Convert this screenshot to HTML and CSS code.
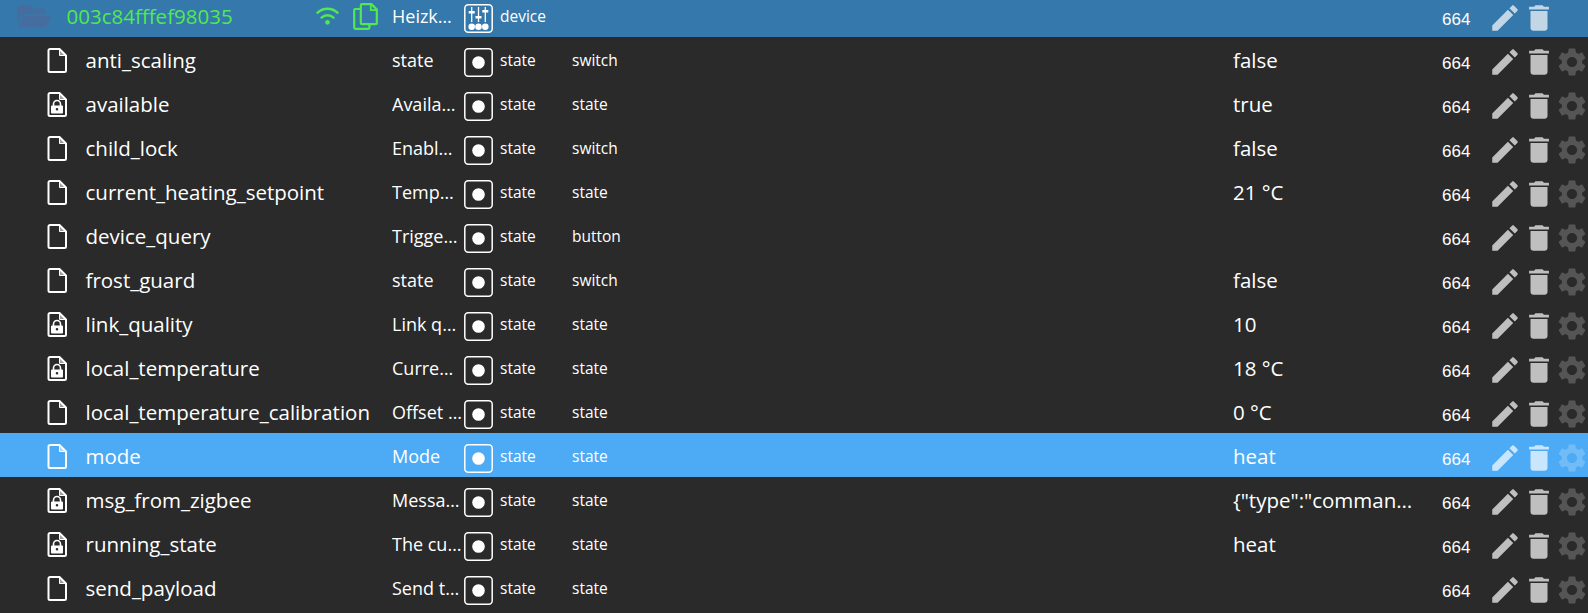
FILE: index.html
```html
<!DOCTYPE html>
<html lang="en">
<head>
<meta charset="utf-8">
<title>Objects</title>
<link rel="stylesheet" href="styles.css">
</head>
<body>
<svg class="sprite" aria-hidden="true">
  <symbol id="i-folder" viewBox="0 0 576 512"><path d="M572.694 292.093L500.27 416.248A63.997 63.997 0 0 1 444.989 448H45.025c-18.523 0-30.064-20.093-20.731-36.093l72.424-124.155A64 64 0 0 1 152 256h399.964c18.523 0 30.064 20.093 20.73 36.093zM152 224h328v-48c0-26.51-21.49-48-48-48H272l-64-64H48C21.49 64 0 85.49 0 112v278.046l69.077-118.418C86.214 242.25 117.989 224 152 224z"/></symbol>
  <symbol id="i-wifi" viewBox="0 0 24 18"><path d="M12 13.2a2.4 2.4 0 1 0 0 4.8 2.4 2.4 0 0 0 0-4.8z"/><path d="M5.8 10.6a9 9 0 0 1 12.4 0" fill="none" stroke="currentColor" stroke-width="2.6" stroke-linecap="round"/><path d="M1.6 5.6a15.2 15.2 0 0 1 20.8 0" fill="none" stroke="currentColor" stroke-width="2.6" stroke-linecap="round"/></symbol>
  <symbol id="i-copy" viewBox="0 0 25 27"><path d="M9 1.2h9.5l5.3 5.3V20a1.2 1.2 0 0 1-1.2 1.2H9A1.2 1.2 0 0 1 7.800 20V2.400A1.200 1.200 0 0 1 9 1.200z" fill="none" stroke="currentColor" stroke-width="2.200"/><path d="M17.800 1.500v5.700h5.700" fill="none" stroke="currentColor" stroke-width="1.800"/><path d="M7.800 6H2.400A1.200 1.200 0 0 0 1.200 7.200v17.400a1.200 1.200 0 0 0 1.200 1.200h12.800a1.200 1.200 0 0 0 1.200-1.200v-3.400" fill="none" stroke="currentColor" stroke-width="2.200"/></symbol>
  <symbol id="i-file" viewBox="0 0 20 25"><path d="M3 1h9.500L19 7.500V22.500a1.500 1.500 0 0 1-1.500 1.500H3a1.500 1.500 0 0 1-1.500-1.500V2.500A1.500 1.500 0 0 1 3 1z" fill="none" stroke="currentColor" stroke-width="2"/><path d="M12.500 1.500V7.500H18.500z" fill="currentColor" opacity=".55"/><path d="M12.500 1.500V7.500H18.500" fill="none" stroke="currentColor" stroke-width="1"/></symbol>
  <symbol id="i-lock" viewBox="0 0 20 25"><path d="M3 1h9.500L19 7.500V22.500a1.500 1.500 0 0 1-1.500 1.500H3a1.500 1.500 0 0 1-1.500-1.500V2.500A1.500 1.500 0 0 1 3 1z" fill="none" stroke="currentColor" stroke-width="2"/><path d="M12.500 1.500V7.500H18.500z" fill="currentColor" opacity=".55"/><path d="M12.500 1.500V7.500H18.500" fill="none" stroke="currentColor" stroke-width="1"/><path d="M6.500 14v-2a3.500 3.500 0 0 1 7 0v2" fill="none" stroke="currentColor" stroke-width="1.600"/><path fill-rule="evenodd" d="M5 13.500h10a1 1 0 0 1 1 1v6a1 1 0 0 1-1 1H5a1 1 0 0 1-1-1v-6a1 1 0 0 1 1-1zM10 16a1.300 1.300 0 1 0 0 2.600 1.300 1.300 0 0 0 0-2.600z"/></symbol>
  <symbol id="i-state" viewBox="0 0 29 29"><rect x=".8" y=".8" width="27.400" height="27.400" rx="3.500" fill="none" stroke="currentColor" stroke-width="1.500"/><circle cx="14.500" cy="14.500" r="6.300"/></symbol>
  <symbol id="i-device" viewBox="0 0 29 29"><rect x=".8" y=".8" width="27.400" height="27.400" rx="3.500" fill="none" stroke="currentColor" stroke-width="1.500"/><path d="M7.700 3v15M14.500 3v15M21.300 3v15" stroke="currentColor" stroke-width="1.300"/><path d="M4.700 7h6v2.600h-6zM11.500 12h6v2.600h-6zM18.300 6h6v2.600h-6z"/><circle cx="7.700" cy="22.700" r="3.300"/><circle cx="14.500" cy="22.700" r="3.300"/><circle cx="21.300" cy="22.700" r="3.300"/></symbol>
  <symbol id="i-edit" viewBox="0 0 24 24"><path d="M3 17.250V21h3.750L17.810 9.940l-3.750-3.750L3 17.250zM20.710 7.040c.39-.39.39-1.020 0-1.410l-2.340-2.340c-.39-.39-1.020-.39-1.410 0l-1.830 1.830 3.750 3.750 1.830-1.830z"/></symbol>
  <symbol id="i-trash" viewBox="0 0 24 24"><path d="M6 19c0 1.100.9 2 2 2h8c1.100 0 2-.9 2-2V7H6v12zM19 4h-3.500l-1-1h-5l-1 1H5v2h14V4z"/></symbol>
  <symbol id="i-gear" viewBox="0 0 24 24"><path d="M19.140 12.940c.04-.3.06-.61.06-.94 0-.32-.02-.64-.07-.94l2.030-1.580c.18-.14.23-.41.12-.61l-1.920-3.320c-.12-.22-.37-.29-.59-.22l-2.390.96c-.5-.38-1.030-.7-1.620-.94l-.36-2.540c-.04-.24-.24-.41-.48-.41h-3.840c-.24 0-.43.17-.47.41l-.36 2.540c-.59.24-1.130.57-1.620.94l-2.390-.96c-.22-.08-.47 0-.59.22L2.740 8.870c-.12.21-.08.47.12.61l2.030 1.580c-.05.3-.09.63-.09.94s.02.64.07.94l-2.030 1.580c-.18.14-.23.41-.12.61l1.920 3.320c.12.22.37.29.59.22l2.390-.96c.5.38 1.030.7 1.620.94l.36 2.540c.05.24.24.41.48.41h3.840c.24 0 .44-.17.47-.41l.36-2.540c.59-.24 1.130-.56 1.620-.94l2.390.96c.22.08.47 0 .59-.22l1.920-3.320c.12-.22.07-.47-.12-.61l-2.010-1.580zM12 15.600c-1.980 0-3.600-1.620-3.600-3.600s1.620-3.600 3.600-3.600 3.600 1.620 3.600 3.600-1.620 3.600-3.600 3.600z"/></symbol>
</svg>
<main class="tree">
  <div class="row row-device">
    <div class="name"><svg class="ic-folder"><use href="#i-folder"/></svg><span class="id">003c84fffef98035</span><svg class="ic-wifi"><use href="#i-wifi"/></svg><svg class="ic-copy"><use href="#i-copy"/></svg></div>
    <div class="desc">Heizkörper</div><svg class="ic-role"><use href="#i-device"/></svg><div class="type">device</div><div class="role"></div><div class="value"></div>
    <div class="acl">664</div><svg class="act"><use href="#i-edit"/></svg><svg class="act"><use href="#i-trash"/></svg><span class="act"></span>
  </div>
  <div class="row">
    <div class="name"><svg class="ic-file"><use href="#i-file"/></svg><span>anti_scaling</span></div>
    <div class="desc">state</div><svg class="ic-role"><use href="#i-state"/></svg><div class="type">state</div><div class="role">switch</div><div class="value">false</div>
    <div class="acl">664</div><svg class="act"><use href="#i-edit"/></svg><svg class="act"><use href="#i-trash"/></svg><svg class="act gear"><use href="#i-gear"/></svg>
  </div>
  <div class="row">
    <div class="name"><svg class="ic-file"><use href="#i-lock"/></svg><span>available</span></div>
    <div class="desc">Available</div><svg class="ic-role"><use href="#i-state"/></svg><div class="type">state</div><div class="role">state</div><div class="value">true</div>
    <div class="acl">664</div><svg class="act"><use href="#i-edit"/></svg><svg class="act"><use href="#i-trash"/></svg><svg class="act gear"><use href="#i-gear"/></svg>
  </div>
  <div class="row">
    <div class="name"><svg class="ic-file"><use href="#i-file"/></svg><span>child_lock</span></div>
    <div class="desc">Enable child lock</div><svg class="ic-role"><use href="#i-state"/></svg><div class="type">state</div><div class="role">switch</div><div class="value">false</div>
    <div class="acl">664</div><svg class="act"><use href="#i-edit"/></svg><svg class="act"><use href="#i-trash"/></svg><svg class="act gear"><use href="#i-gear"/></svg>
  </div>
  <div class="row">
    <div class="name"><svg class="ic-file"><use href="#i-file"/></svg><span>current_heating_setpoint</span></div>
    <div class="desc">Temperature setpoint</div><svg class="ic-role"><use href="#i-state"/></svg><div class="type">state</div><div class="role">state</div><div class="value">21 °C</div>
    <div class="acl">664</div><svg class="act"><use href="#i-edit"/></svg><svg class="act"><use href="#i-trash"/></svg><svg class="act gear"><use href="#i-gear"/></svg>
  </div>
  <div class="row">
    <div class="name"><svg class="ic-file"><use href="#i-file"/></svg><span>device_query</span></div>
    <div class="desc">Trigger device query</div><svg class="ic-role"><use href="#i-state"/></svg><div class="type">state</div><div class="role">button</div><div class="value"></div>
    <div class="acl">664</div><svg class="act"><use href="#i-edit"/></svg><svg class="act"><use href="#i-trash"/></svg><svg class="act gear"><use href="#i-gear"/></svg>
  </div>
  <div class="row">
    <div class="name"><svg class="ic-file"><use href="#i-file"/></svg><span>frost_guard</span></div>
    <div class="desc">state</div><svg class="ic-role"><use href="#i-state"/></svg><div class="type">state</div><div class="role">switch</div><div class="value">false</div>
    <div class="acl">664</div><svg class="act"><use href="#i-edit"/></svg><svg class="act"><use href="#i-trash"/></svg><svg class="act gear"><use href="#i-gear"/></svg>
  </div>
  <div class="row">
    <div class="name"><svg class="ic-file"><use href="#i-lock"/></svg><span>link_quality</span></div>
    <div class="desc">Link quality</div><svg class="ic-role"><use href="#i-state"/></svg><div class="type">state</div><div class="role">state</div><div class="value">10</div>
    <div class="acl">664</div><svg class="act"><use href="#i-edit"/></svg><svg class="act"><use href="#i-trash"/></svg><svg class="act gear"><use href="#i-gear"/></svg>
  </div>
  <div class="row">
    <div class="name"><svg class="ic-file"><use href="#i-lock"/></svg><span>local_temperature</span></div>
    <div class="desc">Current temperature</div><svg class="ic-role"><use href="#i-state"/></svg><div class="type">state</div><div class="role">state</div><div class="value">18 °C</div>
    <div class="acl">664</div><svg class="act"><use href="#i-edit"/></svg><svg class="act"><use href="#i-trash"/></svg><svg class="act gear"><use href="#i-gear"/></svg>
  </div>
  <div class="row">
    <div class="name"><svg class="ic-file"><use href="#i-file"/></svg><span>local_temperature_calibration</span></div>
    <div class="desc">Offset to be used</div><svg class="ic-role"><use href="#i-state"/></svg><div class="type">state</div><div class="role">state</div><div class="value">0 °C</div>
    <div class="acl">664</div><svg class="act"><use href="#i-edit"/></svg><svg class="act"><use href="#i-trash"/></svg><svg class="act gear"><use href="#i-gear"/></svg>
  </div>
  <div class="row row-selected">
    <div class="name"><svg class="ic-file"><use href="#i-file"/></svg><span>mode</span></div>
    <div class="desc">Mode</div><svg class="ic-role"><use href="#i-state"/></svg><div class="type">state</div><div class="role">state</div><div class="value">heat</div>
    <div class="acl">664</div><svg class="act"><use href="#i-edit"/></svg><svg class="act"><use href="#i-trash"/></svg><svg class="act gear"><use href="#i-gear"/></svg>
  </div>
  <div class="row">
    <div class="name"><svg class="ic-file"><use href="#i-lock"/></svg><span>msg_from_zigbee</span></div>
    <div class="desc">Message from zigbee</div><svg class="ic-role"><use href="#i-state"/></svg><div class="type">state</div><div class="role">state</div><div class="value">{"type":"commandStatus"}</div>
    <div class="acl">664</div><svg class="act"><use href="#i-edit"/></svg><svg class="act"><use href="#i-trash"/></svg><svg class="act gear"><use href="#i-gear"/></svg>
  </div>
  <div class="row">
    <div class="name"><svg class="ic-file"><use href="#i-lock"/></svg><span>running_state</span></div>
    <div class="desc">The current running state</div><svg class="ic-role"><use href="#i-state"/></svg><div class="type">state</div><div class="role">state</div><div class="value">heat</div>
    <div class="acl">664</div><svg class="act"><use href="#i-edit"/></svg><svg class="act"><use href="#i-trash"/></svg><svg class="act gear"><use href="#i-gear"/></svg>
  </div>
  <div class="row">
    <div class="name"><svg class="ic-file"><use href="#i-file"/></svg><span>send_payload</span></div>
    <div class="desc">Send to Zigbee</div><svg class="ic-role"><use href="#i-state"/></svg><div class="type">state</div><div class="role">state</div><div class="value"></div>
    <div class="acl">664</div><svg class="act"><use href="#i-edit"/></svg><svg class="act"><use href="#i-trash"/></svg><svg class="act gear"><use href="#i-gear"/></svg>
  </div>
</main>
</body>
</html>
```
FILE: styles.css
```css
html, body {
  margin: 0;
  height: 100%;
  overflow: hidden;
  background: #2a2a2a;
}
.sprite {
  display: none;
}
.tree {
  margin-top: -7px;
  color: #fff;
  font-family: "Open Sans", "Noto Sans", sans-serif;
}
.row {
  display: grid;
  grid-template-columns: 392px 72px 36px 72px 661px 209px 46px 34px 33px 33px;
  align-items: center;
  box-sizing: border-box;
  height: 44px;
  padding-top: 6px;
  background: #2a2a2a;
}
.row-device {
  background: #3578ab;
}
.row-selected {
  background: #4dabf5;
}
.name {
  display: flex;
  align-items: center;
  padding-left: 47px;
  font-size: 20.500px;
  white-space: nowrap;
}
.name span {
  margin-bottom: 4px;
}
.row-device .name {
  padding-left: 17px;
  padding-right: 14px;
}
.ic-file {
  flex: none;
  width: 20px;
  height: 25px;
  margin: 0 18.500px 4px 0;
  color: #fff;
  fill: currentColor;
}
.ic-folder {
  flex: none;
  width: 34px;
  height: 30px;
  margin: 0 15.500px 4px 0;
  fill: #466d9f;
}
.id {
  color: #50ea50;
}
.ic-wifi {
  flex: none;
  width: 23px;
  height: 18px;
  margin: 0 14px 4px auto;
  color: #50ea50;
  fill: currentColor;
}
.ic-copy {
  flex: none;
  width: 25px;
  height: 27px;
  margin-bottom: 4px;
  color: #50ea50;
  fill: none;
}
.desc {
  overflow: hidden;
  width: 70px;
  margin-bottom: 4px;
  font-size: 18px;
  white-space: nowrap;
  text-overflow: ellipsis;
}
.ic-role {
  width: 29px;
  height: 29px;
  color: #fff;
  fill: #fff;
}
.type,
.role {
  margin-bottom: 4px;
  font-size: 15.500px;
}
.value {
  overflow: hidden;
  width: 180px;
  margin-bottom: 4px;
  font-size: 20.500px;
  white-space: nowrap;
  text-overflow: ellipsis;
}
.acl {
  margin-top: 4px;
  font-family: "Liberation Sans", Arial, sans-serif;
  font-size: 17px;
}
.act {
  display: block;
  justify-self: center;
  width: 34px;
  height: 34px;
  fill: #fff;
  opacity: .7;
}
.gear {
  opacity: .2;
}
```
